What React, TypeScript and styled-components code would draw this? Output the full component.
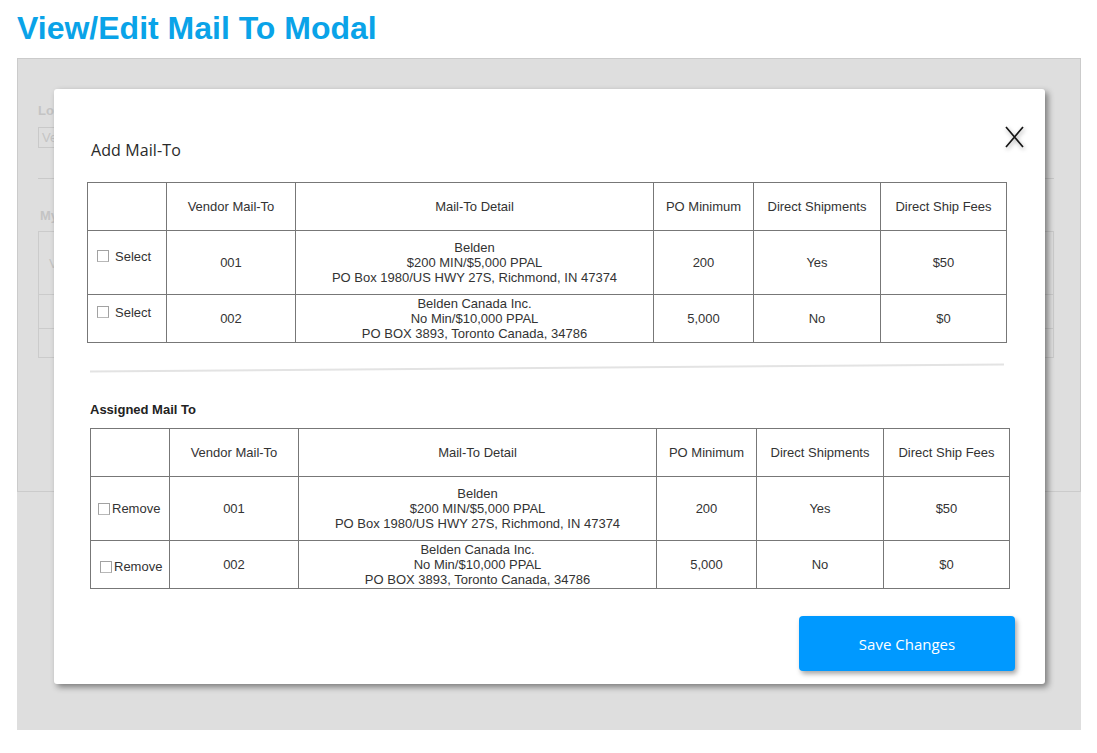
import React from "react";
import styled, { createGlobalStyle } from "styled-components";

const Global = createGlobalStyle`
  html, body { margin: 0; padding: 0; background: #ffffff; }
  body { font-family: "Liberation Sans", Arial, sans-serif; }
`;

const Page = styled.div`
  width: 1064px;
  padding: 0 16px 23px 17px;
`;

const Title = styled.h1`
  margin: 0;
  height: 58px;
  box-sizing: border-box;
  padding-top: 10px;
  font: bold 32px/37px "Liberation Sans", Arial, sans-serif;
  color: #0aa3e8;
  white-space: nowrap;
`;

const Stage = styled.div`
  position: relative;
  height: 672px;
  background: #dedede;
`;

const BackPage = styled.div`
  height: 434px;
  box-sizing: border-box;
  border: 1px solid #cbcbcb;
  padding: 44px 26px 0 20px;
  color: #c4c4c4;
  font-size: 13px;
`;

const BackLabel = styled.div`
  font-weight: bold;
  line-height: 15px;
`;

const BackInput = styled.div`
  margin-top: 9px;
  width: 200px;
  height: 21px;
  box-sizing: border-box;
  border: 1px solid #c9c9c9;
  padding: 3px 3px;
  line-height: 14px;
`;

const BackRule = styled.div`
  margin-top: 30px;
  height: 1px;
  background: #c9c9c9;
`;

const BackHeading = styled.div`
  margin-top: 29px;
  font-weight: bold;
  line-height: 16px;
  padding-left: 2px;
`;

const BackTable = styled.div`
  margin-top: 7px;
  border: 1px solid #cbcbcb;
  display: grid;
  grid-template-rows: 63px 34px 28px;
`;

const BackRow = styled.div<{ $last?: boolean }>`
  border-bottom: ${(p) => (p.$last ? "none" : "1px solid #cbcbcb")};
  padding-left: 10px;
  display: flex;
  align-items: center;
`;

const Modal = styled.div`
  position: absolute;
  left: 37px;
  top: 31px;
  width: 991px;
  height: 595px;
  box-sizing: border-box;
  padding: 51px 36px 0 36px;
  background: #ffffff;
  border-radius: 3px;
  box-shadow: 3px 3px 6px rgba(0, 0, 0, 0.45);
  display: flex;
  flex-direction: column;
`;

const CloseButton = styled.button`
  position: absolute;
  top: 36px;
  right: 19px;
  width: 22px;
  height: 24px;
  padding: 0;
  border: none;
  background: transparent;
  cursor: pointer;
  filter: drop-shadow(1px 2px 2px rgba(0, 0, 0, 0.35));
`;

const SectionTitle = styled.h2`
  margin: 0 0 0 1px;
  font: 500 16px/20px "Open Sans", "Liberation Sans", sans-serif;
  color: #2a2a2a;
  letter-spacing: 0.1px;
`;

const SubTitle = styled.h3`
  margin: 33px 0 0 0;
  font: bold 13px/16px "Liberation Sans", Arial, sans-serif;
  color: #222222;
`;

const Table = styled.table<{ $shift: number; $top: number }>`
  margin-top: ${(p) => p.$top}px;
  margin-left: ${(p) => p.$shift}px;
  width: 920px;
  border-collapse: collapse;
  table-layout: fixed;
  font: 13px/15px "Liberation Sans", Arial, sans-serif;
  color: #333333;
`;

const Row = styled.tr<{ $h: number }>`
  height: ${(p) => p.$h}px;
`;

const Cell = styled.td`
  border: 1px solid #777777;
  padding: 0 4px;
  text-align: center;
  vertical-align: middle;
`;

const CheckCell = styled.td<{ $pad: number; $gap: number; $up: number; $down: number }>`
  border: 1px solid #777777;
  padding: ${(p) => p.$down}px 0 ${(p) => p.$up}px ${(p) => p.$pad}px;
  vertical-align: middle;
  text-align: left;
  white-space: nowrap;

  label {
    display: inline-flex;
    align-items: center;
    gap: ${(p) => p.$gap}px;
  }
`;

const Box = styled.span`
  display: inline-block;
  flex: none;
  width: 12px;
  height: 12px;
  box-sizing: border-box;
  border: 1px solid #a2a2a2;
  border-bottom-color: #b8b8b8;
  background: #ffffff;
`;

const Divider = styled.div`
  margin-top: 24px;
  width: 914px;
  height: 2px;
  background: #e3e3e3;
  transform: rotate(-0.44deg);
`;

const SaveButton = styled.button`
  align-self: flex-end;
  margin: 27px -6px 0 0;
  width: 216px;
  height: 55px;
  border: none;
  border-radius: 4px;
  background: #0099ff;
  color: #ffffff;
  font: 15px "Open Sans", "Liberation Sans", sans-serif;
  box-shadow: 2px 3px 5px rgba(0, 0, 0, 0.35);
  cursor: pointer;
`;

type MailTo = {
  code: string;
  lines: string[];
  min: string;
  direct: string;
  fee: string;
  h: number;
};

const rows: MailTo[] = [
  {
    code: "001",
    lines: ["Belden", "$200 MIN/$5,000 PPAL", "PO Box 1980/US HWY 27S, Richmond, IN 47374"],
    min: "200",
    direct: "Yes",
    fee: "$50",
    h: 64,
  },
  {
    code: "002",
    lines: ["Belden Canada Inc.", "No Min/$10,000 PPAL", "PO BOX 3893, Toronto Canada, 34786"],
    min: "5,000",
    direct: "No",
    fee: "$0",
    h: 48,
  },
];

const Cols = () => (
  <colgroup>
    <col style={{ width: 79 }} />
    <col style={{ width: 129 }} />
    <col style={{ width: 358 }} />
    <col style={{ width: 100 }} />
    <col style={{ width: 127 }} />
    <col />
  </colgroup>
);

const Head = () => (
  <thead>
    <Row $h={48}>
      <Cell />
      <Cell>Vendor Mail-To</Cell>
      <Cell>Mail-To Detail</Cell>
      <Cell>PO Minimum</Cell>
      <Cell>Direct Shipments</Cell>
      <Cell>Direct Ship Fees</Cell>
    </Row>
  </thead>
);

const DataCells = ({ r }: { r: MailTo }) => (
  <>
    <Cell>{r.code}</Cell>
    <Cell>
      {r.lines.map((l, i) => (
        <div key={i}>{l}</div>
      ))}
    </Cell>
    <Cell>{r.min}</Cell>
    <Cell>{r.direct}</Cell>
    <Cell>{r.fee}</Cell>
  </>
);

const CloseIcon = () => (
  <svg width="22" height="24" viewBox="0 0 22 24">
    <path d="M2 2 L19 22 M19 2 L2 22" stroke="#151515" strokeWidth="1.7" fill="none" />
  </svg>
);

export default function App() {
  return (
    <>
      <Global />
      <Page>
        <Title>View/Edit Mail To Modal</Title>
        <Stage>
          <BackPage>
            <BackLabel>Location</BackLabel>
            <BackInput>Vendor</BackInput>
            <BackRule />
            <BackHeading>My Mail-To</BackHeading>
            <BackTable>
              <BackRow>Vendor Mail-To</BackRow>
              <BackRow />
              <BackRow $last />
            </BackTable>
          </BackPage>

          <Modal>
            <CloseButton aria-label="Close">
              <CloseIcon />
            </CloseButton>
            <SectionTitle>Add Mail-To</SectionTitle>
            <Table $shift={-3} $top={22}>
              <Cols />
              <Head />
              <tbody>
                {rows.map((r) => (
                  <Row key={r.code} $h={r.h}>
                    <CheckCell $pad={9} $gap={6} $up={11} $down={0}>
                      <label>
                        <Box />
                        Select
                      </label>
                    </CheckCell>
                    <DataCells r={r} />
                  </Row>
                ))}
              </tbody>
            </Table>
            <Divider />
            <SubTitle>Assigned Mail To</SubTitle>
            <Table $shift={0} $top={10}>
              <Cols />
              <Head />
              <tbody>
                {rows.map((r, i) => (
                  <Row key={r.code} $h={r.h}>
                    <CheckCell $pad={i === 0 ? 7 : 9} $gap={2} $up={0} $down={i === 0 ? 2 : 6}>
                      <label>
                        <Box />
                        Remove
                      </label>
                    </CheckCell>
                    <DataCells r={r} />
                  </Row>
                ))}
              </tbody>
            </Table>
            <SaveButton>Save Changes</SaveButton>
          </Modal>
        </Stage>
      </Page>
    </>
  );
}
